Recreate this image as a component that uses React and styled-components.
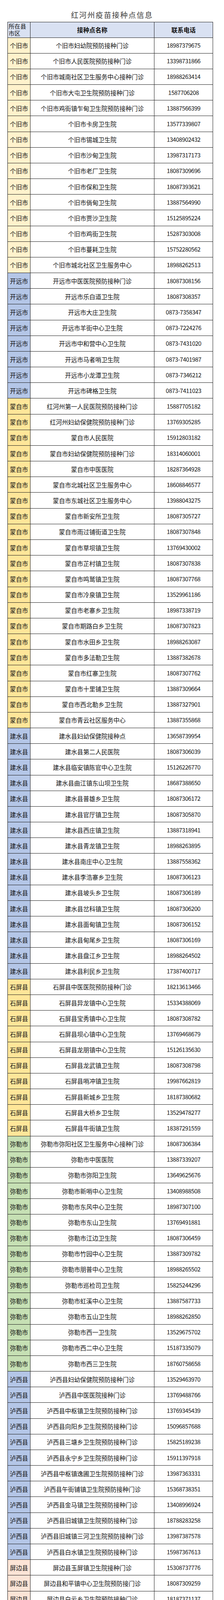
import React from "react";
import styled, { createGlobalStyle } from "styled-components";

const GlobalStyle = createGlobalStyle`
  html, body {
    margin: 0;
    padding: 0;
    background: #ffffff;
  }
  body {
    font-family: "Noto Sans CJK SC", "Noto Sans", sans-serif;
    color: #111111;
  }
`;

// excel-ish fills per county
const tones = {
  cream: "#fff2cc",
  gold: "#ffe699",
  blue: "#b4c6e7",
  green: "#c6e0b4",
  peach: "#fce4d6",
};

const groups = [
  {
    area: "个旧市",
    tone: "cream",
    rows: [
      ["个旧市妇幼院预防接种门诊", "18987379675"],
      ["个旧市人民医院预防接种门诊", "13398731866"],
      ["个旧市城南社区卫生服务中心接种门诊", "18988263414"],
      ["个旧市大屯卫生院预防接种门诊", "1587706208"],
      ["个旧市鸡街镇乍甸卫生院预防接种门诊", "13887566399"],
      ["个旧市卡房卫生院", "13577339807"],
      ["个旧市锡城卫生院", "13408902432"],
      ["个旧市沙甸卫生院", "13987317173"],
      ["个旧市老厂卫生院", "18087309696"],
      ["个旧市保和卫生院", "18087393621"],
      ["个旧市倘甸卫生院", "13887564990"],
      ["个旧市贾沙卫生院", "15125895224"],
      ["个旧市鸡街卫生院", "15287303008"],
      ["个旧市蔓耗卫生院", "15752280562"],
      ["个旧市城北社区卫生服务中心", "18988262513"],
    ],
  },
  {
    area: "开远市",
    tone: "blue",
    rows: [
      ["开远市中医医院预防接种门诊", "18087308156"],
      ["开远市乐白道卫生院", "18087308357"],
      ["开远市大庄卫生院", "0873-7358347"],
      ["开远市羊街中心卫生院", "0873-7224276"],
      ["开远市中和营中心卫生院", "0873-7431020"],
      ["开远市马者哨卫生院", "0873-7401987"],
      ["开远市小龙潭卫生院", "0873-7346212"],
      ["开远市碑格卫生院", "0873-7411023"],
    ],
  },
  {
    area: "蒙自市",
    tone: "gold",
    rows: [
      ["红河州第一人民医院预防接种门诊", "15887705182"],
      ["红河州妇幼保健院预防接种门诊", "13769305285"],
      ["蒙自市人民医院", "15912803182"],
      ["蒙自市妇幼保健院预防接种门诊", "18314060001"],
      ["蒙自市中医医院", "18287364928"],
      ["蒙自市北城社区卫生服务中心", "18608846577"],
      ["蒙自市东城社区卫生服务中心", "13988043275"],
      ["蒙自市新安所卫生院", "18087305727"],
      ["蒙自市雨过铺街道卫生院", "18087307848"],
      ["蒙自市草坝镇卫生院", "13769430002"],
      ["蒙自市芷村镇卫生院", "18087307838"],
      ["蒙自市鸣鹫镇卫生院", "18087307768"],
      ["蒙自市冷泉镇卫生院", "13529961186"],
      ["蒙自市老寨乡卫生院", "18987338719"],
      ["蒙自市期路白乡卫生院", "18087307823"],
      ["蒙自市水田乡卫生院", "18988263087"],
      ["蒙自市多法勒卫生院", "13887382678"],
      ["蒙自市红寨卫生院", "18087307762"],
      ["蒙自市十里铺卫生院", "13887309664"],
      ["蒙自市西北勒乡卫生院", "13887327901"],
      ["蒙自市青云社区服务中心", "13887355868"],
    ],
  },
  {
    area: "建水县",
    tone: "blue",
    rows: [
      ["建水县妇幼保健院接种点", "13658739954"],
      ["建水县第二人民医院", "18087306039"],
      ["建水县临安镇陈官中心卫生院", "15126226770"],
      ["建水县曲江镇东山坝卫生院", "18687388650"],
      ["建水县普雄乡卫生院", "18087306172"],
      ["建水县官厅镇卫生院", "18087305870"],
      ["建水县西庄镇卫生院", "13887318941"],
      ["建水县青龙镇卫生院", "18988263895"],
      ["建水县南庄中心卫生院", "13887558362"],
      ["建水县李浩寨乡卫生院", "18087306123"],
      ["建水县坡头乡卫生院", "18087306189"],
      ["建水县岔科镇卫生院", "18087306200"],
      ["建水县面甸镇卫生院", "18087306152"],
      ["建水县甸尾乡卫生院", "18087306169"],
      ["建水县盘江乡卫生院", "18988264502"],
      ["建水县利民乡卫生院", "17387400717"],
    ],
  },
  {
    area: "石屏县",
    tone: "gold",
    rows: [
      ["石屏县中医医院预防接种门诊", "18213613466"],
      ["石屏县异龙镇中心卫生院", "15334388069"],
      ["石屏县宝秀镇中心卫生院", "18087308782"],
      ["石屏县坝心镇中心卫生院", "13769468679"],
      ["石屏县龙朋镇中心卫生院", "15126135630"],
      ["石屏县龙武镇卫生院", "18087308798"],
      ["石屏县哨冲镇卫生院", "19987662819"],
      ["石屏县新城乡卫生院", "18187380682"],
      ["石屏县大桥乡卫生院", "13529478277"],
      ["石屏县牛街镇卫生院", "18387291559"],
    ],
  },
  {
    area: "弥勒市",
    tone: "green",
    rows: [
      ["弥勒市弥阳社区卫生服务中心接种门诊", "18087306384"],
      ["弥勒市中医医院", "13887339207"],
      ["弥勒市弥阳卫生院", "13649625676"],
      ["弥勒市新哨中心卫生院", "13408988508"],
      ["弥勒市东风中心卫生院", "18987307100"],
      ["弥勒市东山卫生院", "13769491881"],
      ["弥勒市江边卫生院", "18087306459"],
      ["弥勒市竹园中心卫生院", "13887309782"],
      ["弥勒市朋普中心卫生院", "18988265502"],
      ["弥勒市巡检司卫生院", "15825244296"],
      ["弥勒市虹溪中心卫生院", "13887587733"],
      ["弥勒市五山卫生院", "18988262850"],
      ["弥勒市西一卫生院", "13529675702"],
      ["弥勒市西二中心卫生院", "15187335079"],
      ["弥勒市西三卫生院", "18760758658"],
    ],
  },
  {
    area: "泸西县",
    tone: "blue",
    rows: [
      ["泸西县妇幼保健院预防接种门诊", "13529463970"],
      ["泸西县中医医院接种门诊", "13769488766"],
      ["泸西县中枢镇卫生院预防接种门诊", "13769345439"],
      ["泸西县向阳乡卫生院预防接种门诊", "15096857688"],
      ["泸西县三塘乡卫生院预防接种门诊", "15825189238"],
      ["泸西县永宁乡卫生院预防接种门诊", "15911397918"],
      ["泸西县中枢镇逸圃卫生院预防接种门诊", "13987363331"],
      ["泸西县午街铺镇卫生院预防接种门诊", "15368738351"],
      ["泸西县金马镇卫生院预防接种门诊", "13408996924"],
      ["泸西县旧城镇卫生院预防接种门诊", "18788283258"],
      ["泸西县旧城镇三河卫生院预防接种门诊", "13987387578"],
      ["泸西县白水镇卫生院预防接种门诊", "15987367613"],
    ],
  },
  {
    area: "屏边县",
    tone: "peach",
    rows: [
      ["屏边县玉屏镇卫生院接种门诊", "15308737776"],
      ["屏边县和平镇中心卫生院预防接门诊", "18087309259"],
      ["屏边县白云乡卫生院预防接种门诊", "18187371137"],
      ["屏边县新华乡卫生院预防接种门诊", "15925349502"],
      ["屏边县新现镇卫生院预防接种门诊", "18213660115"],
      ["屏边县白河镇卫生院预防接种门诊", "15770345617"],
      ["屏边县湾塘乡卫生院预防接种门诊", "13887355022"],
    ],
  },
  {
    area: "金平县",
    tone: "green",
    rows: [
      ["金平县金河镇卫生院接种门诊", "13108738265"],
      ["金平县妇幼保健计划生育服务中心预防接种门诊", "18788405892"],
      ["金平县城区社区服务中心", "15126381003"],
      ["金平县大寨乡卫生院", "15752276260"],
      ["金平县勐桥乡卫生院", "18187038931"],
      ["金平县马鞍底乡卫生院", "13577304778"],
      ["金平县沙依坡乡卫生院", "15287323105"],
      ["金平县阿得博乡卫生院", "13769335592"],
      ["金平县勐拉镇卫生院", "13769382964"],
      ["金平县金水河镇卫生院", "15287370643"],
      ["金平县者米乡卫生院", "15287355946"],
      ["金平县铜厂乡卫生院", "15126153105"],
      ["金平县营盘乡卫生院", "15154983304"],
      ["金平县老勐镇卫生院", "15126118427"],
      ["金平县老集寨卫生院", "13887569910"],
    ],
  },
  {
    area: "元阳县",
    tone: "blue",
    rows: [
      ["元阳县南沙卫生院接种门诊", "18087306798"],
      ["元阳县新街镇卫生院", "15368730351"],
      ["元阳县牛角寨卫生院", "15096885945"],
      ["元阳县沙拉托卫生院", "18788279677"],
      ["元阳县胜村卫生院", "13769453198"],
      ["元阳县嘎娘卫生院", "18287360515"],
      ["元阳县上新城卫生院", "13887593394"],
      ["元阳县小新街卫生院", "15126204975"],
      ["元阳县逢春岭卫生院", "15808688820"],
      ["元阳县大坪卫生院", "13649609779"],
      ["元阳县攀枝花卫生院", "13769384132"],
      ["元阳县黄茅岭卫生院", "13759417213"],
      ["元阳县俄扎卫生院", "15096875020"],
      ["元阳县黄草岭卫生院", "15087366941"],
      ["元阳县马街卫生院", "18314395341"],
    ],
  },
  {
    area: "红河县",
    tone: "green",
    rows: [
      ["红河县中医医院接种门诊", "13988053464"],
      ["红河县迤萨镇卫生院", "18087309357"],
      ["红河县甲寅镇卫生院", "13769359327"],
      ["红河县石头寨乡卫生院", "15187349091"],
      ["红河县阿扎河乡卫生院", "15126102075"],
      ["红河县洛恩乡卫生院", "18849828348"],
      ["红河县宝华乡卫生院", "13320407326"],
      ["红河县乐育镇卫生院", "18288221145"],
      ["红河县浪堤镇卫生院", "18214333525"],
      ["红河县架车乡卫生院", "13577303771"],
      ["红河县羊街乡卫生院", "15974731944"],
      ["红河县车古乡卫生院", "18387389305"],
      ["红河县垤玛乡卫生院", "18406901271"],
      ["红河县三村乡卫生院", "15096773317"],
    ],
  },
  {
    area: "绿春县",
    tone: "blue",
    rows: [
      ["绿春县妇计中心门诊", "13887302796"],
      ["绿春县大兴镇卫生院", "13769473183"],
      ["绿春县牛孔镇卫生院", "13888702341"],
      ["绿春县大水沟乡卫生院", "15974720052"],
      ["绿春县大黑山镇卫生院", "15087394681"],
      ["绿春县骑马坝乡卫生院", "15394875837"],
      ["绿春县半坡乡卫生院", "15126179503"],
      ["绿春县平河镇卫生院", "18387393494"],
      ["绿春县戈奎乡卫生院", "15087387423"],
      ["绿春县三猛乡卫生院", "18214344400"],
    ],
  },
  {
    area: "河口县",
    tone: "green",
    rows: [
      ["河口瑶族自治县河口镇社区卫生服务中心", "18187372612"],
      ["河口瑶族自治县桥头乡中心卫生院", "15126344696"],
      ["河口瑶族自治县南溪镇中心卫生院", "15974600108"],
      ["河口瑶族自治县莲花滩乡卫生院", "18287377587"],
      ["河口瑶族自治县瑶山乡卫生院", "13887306048"],
      ["河口瑶族自治县蚂蝗堡卫生院", "18183736106"],
      ["河口瑶族自治县河口镇坝洒卫生院", "18787383589"],
      ["河口瑶族自治县老范寨乡卫生院", "18988267108"],
    ],
  },
];

const Page = styled.div`
  width: 573px;
  padding-top: 26px;
  box-sizing: border-box;
`;

const Title = styled.div`
  height: 24px;
  margin-bottom: 6px;
  text-align: center;
  font-size: 19px;
  line-height: 24px;
  font-weight: 400;
  letter-spacing: 2px;
  color: #3a3a3a;
`;

const Table = styled.div`
  display: flex;
  flex-direction: column;
  width: 526px;
  margin-left: 19px;
  box-sizing: border-box;
  border-top: 1px solid #1c1c1c;
  border-left: 1px solid #1c1c1c;
`;

const Row = styled.div`
  display: grid;
  grid-template-columns: 58px 317px 150px;
  height: ${(p) => (p.$head ? "39.5px" : "40.18px")};
  flex: none;
`;

const Cell = styled.div`
  display: flex;
  align-items: center;
  justify-content: center;
  min-width: 0;
  height: 100%;
  box-sizing: border-box;
  border-right: 1px solid #1c1c1c;
  border-bottom: 1px solid #1c1c1c;
  overflow: hidden;
  white-space: nowrap;
  font-size: 15.5px;
  line-height: 20px;
  color: #111111;
`;

const HeadCell = styled(Cell)`
  background: #d9e1f2;
  font-weight: 700;
`;

const HeadArea = styled(Cell)`
  background: #d9e1f2;
  justify-content: flex-start;
  padding: 0 2px;
  overflow: visible;
  white-space: normal;
  font-size: 15px;
  line-height: 18px;
`;

const AreaCell = styled(Cell)`
  background: ${(p) => tones[p.$tone]};
`;

const NameCell = styled(Cell)``;

const PhoneCell = styled(Cell)`
  font-size: 15px;
  letter-spacing: -0.5px;
`;

export default function App() {
  return (
    <>
      <GlobalStyle />
      <Page>
        <Title>红河州疫苗接种点信息</Title>
        <Table>
          <Row $head>
            <HeadArea>所在县市区</HeadArea>
            <HeadCell>接种点名称</HeadCell>
            <HeadCell>联系电话</HeadCell>
          </Row>
          {groups.map((g) =>
            g.rows.map(([name, phone]) => (
              <Row key={g.area + name}>
                <AreaCell $tone={g.tone}>{g.area}</AreaCell>
                <NameCell>{name}</NameCell>
                <PhoneCell>{phone}</PhoneCell>
              </Row>
            ))
          )}
        </Table>
      </Page>
    </>
  );
}
